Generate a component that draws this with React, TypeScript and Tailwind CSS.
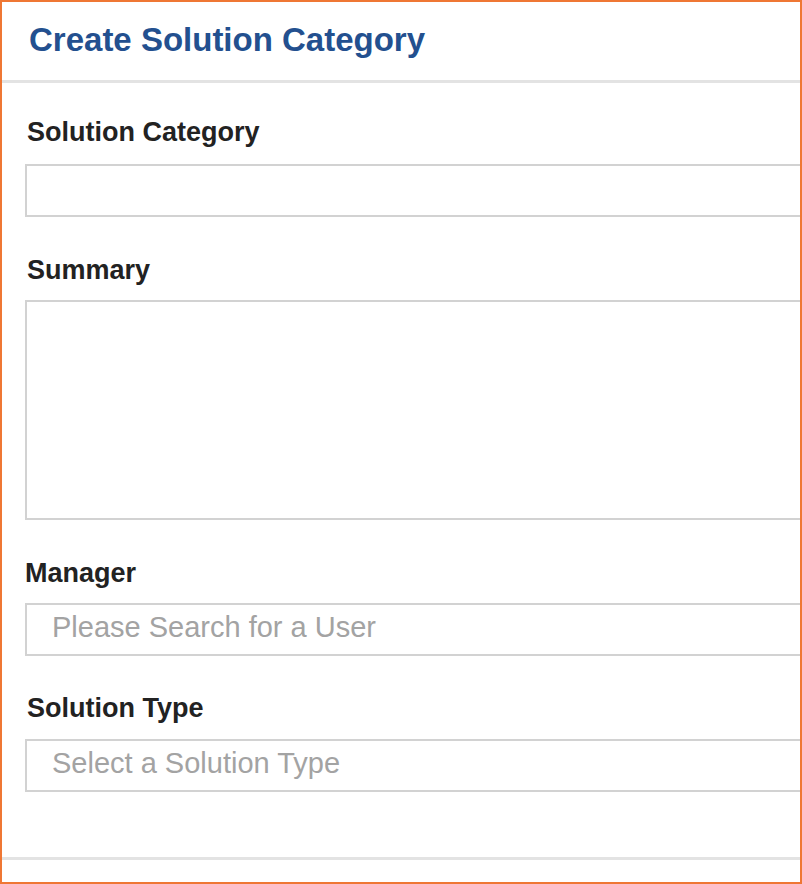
const fieldBox = "block h-[53px] w-[820px] border-2 border-[#d2d2d2] bg-white pl-[25px] pb-[5px] text-[29px] leading-none text-[#333] outline-none";

const Label = ({ text, className = "" }: { text: string; className?: string }) => (
  <label className={`block text-[27px] font-bold leading-none text-[#222] ${className}`}>{text}</label>
);

export default function App() {
  return (
    <div className="h-[884px] w-[802px] overflow-hidden border-2 border-[#ef7734] bg-white font-['Liberation_Sans',Arial,sans-serif]">
      {/* header */}
      <div className="pt-[21px] pb-[24px]">
        <h1 className="pl-[27px] text-[33px] font-bold leading-none text-[#23508f]">Create Solution Category</h1>
      </div>
      <div className="h-[3px] bg-[#e3e3e3]" />

      {/* form body */}
      <div className="pl-[23px] pt-[36px]">
        <Label text="Solution Category" className="pl-[2px]" />
        <input type="text" className={`${fieldBox} mt-[18px]`} />

        <Label text="Summary" className="mt-[40px] pl-[2px]" />
        <textarea className="mt-[16px] block h-[220px] w-[820px] resize-none border-2 border-[#d2d2d2] bg-white outline-none" />

        <Label text="Manager" className="mt-[40px]" />
        <input
          type="text"
          placeholder="Please Search for a User"
          className={`${fieldBox} mt-[16px] placeholder:text-[#a3a3a3]`}
        />

        <Label text="Solution Type" className="mt-[39px] pl-[2px]" />
        <div className="mt-[17px] flex h-[53px] w-[820px] items-center border-2 border-[#d2d2d2] pl-[25px] pb-[5px] text-[29px] leading-none text-[#a3a3a3]">
          Select a Solution Type
        </div>
      </div>

      {/* footer rule */}
      <div className="mt-[65px] h-[3px] bg-[#e3e3e3]" />
    </div>
  );
}
